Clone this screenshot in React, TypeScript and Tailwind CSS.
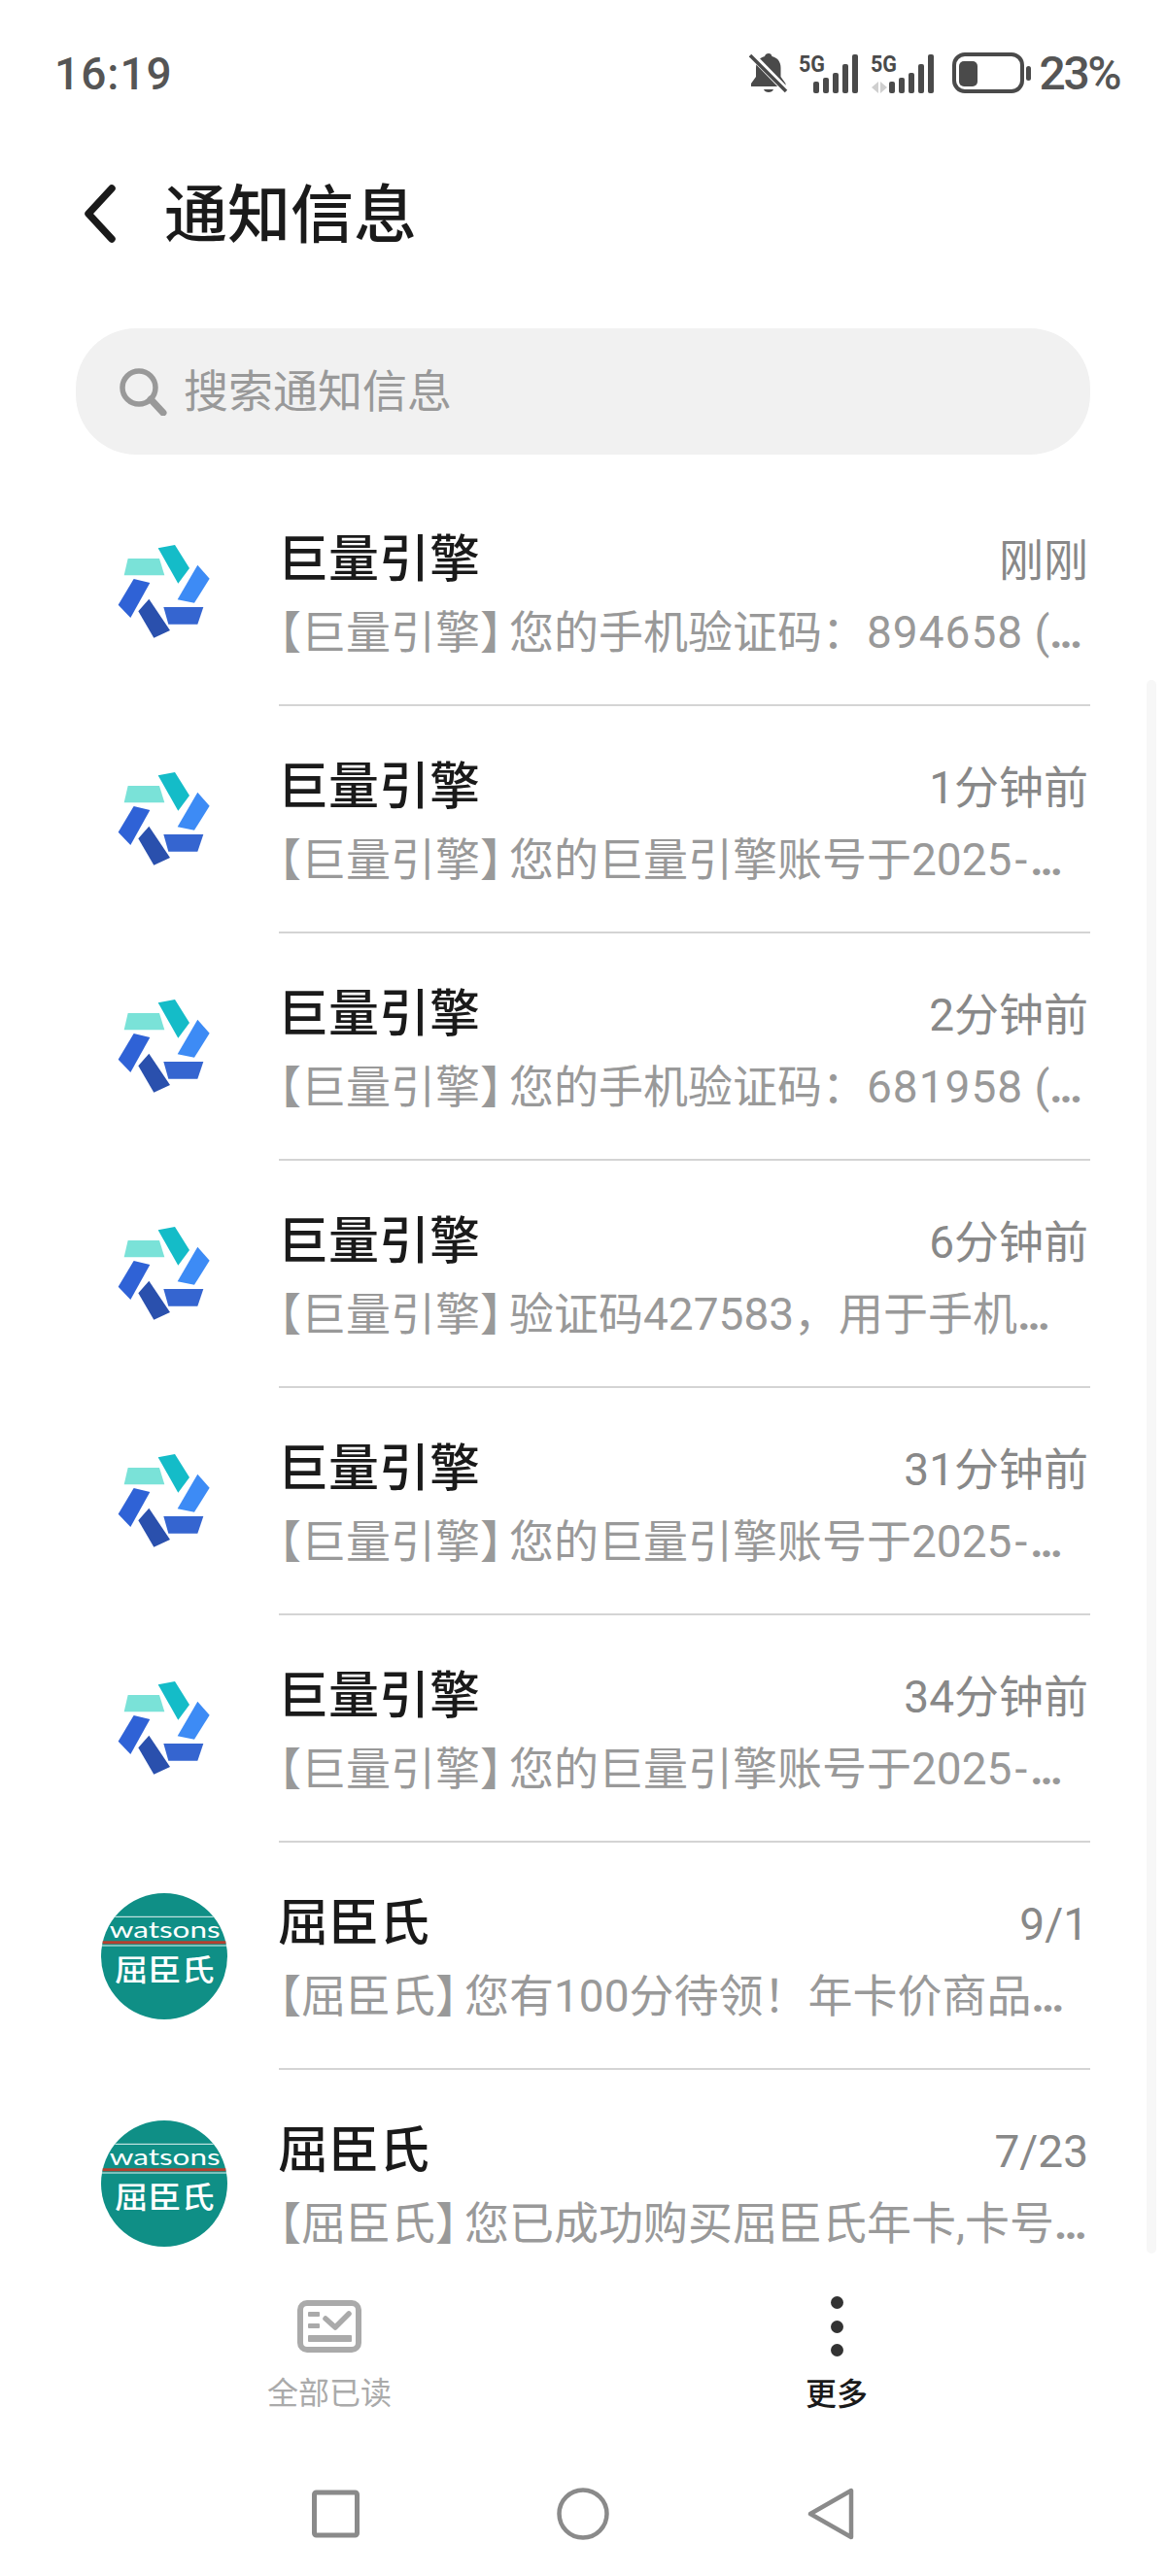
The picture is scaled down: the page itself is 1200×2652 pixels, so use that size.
import React from "react";

const dash = <span className="mx-[3px]">-</span>;

const rows = [
  { logo: "ocean", title: "巨量引擎", time: "刚刚", text: <>您的手机验证码：<span className="tracking-[1px]">894658</span> (</> },
  { logo: "ocean", title: "巨量引擎", time: "1分钟前", text: <>您的巨量引擎账号于2025{dash}</> },
  { logo: "ocean", title: "巨量引擎", time: "2分钟前", text: <>您的手机验证码：<span className="tracking-[1px]">681958</span> (</> },
  { logo: "ocean", title: "巨量引擎", time: "6分钟前", text: <>验证码427583，用于手机</> },
  { logo: "ocean", title: "巨量引擎", time: "31分钟前", text: <>您的巨量引擎账号于2025{dash}</> },
  { logo: "ocean", title: "巨量引擎", time: "34分钟前", text: <>您的巨量引擎账号于2025{dash}</> },
  { logo: "watsons", title: "屈臣氏", time: "9/1", text: <>您有100分待领！年卡价商品</> },
  { logo: "watsons", title: "屈臣氏", time: "7/23", text: <>您已成功购买屈臣氏年卡,卡号</> },
];

const OceanLogo = () => (
  <svg viewBox="42 45 390 390" className="h-[130px] w-[130px]">
    <polygon points="125,135 222,135 238,187 113,187" fill="#7ae2d8" />
    <polygon points="218,103 270,93 315,165 280,212" fill="#14bcc8" />
    <polygon points="340,155 377,197 330,272 278,262" fill="#3d8bf5" />
    <polygon points="235,285 358,285 340,338 250,338" fill="#3565d0" />
    <polygon points="190,260 255,357 205,380 157,298" fill="#2a50ad" />
    <polygon points="143,198 193,210 133,318 95,278" fill="#2f62d6" />
  </svg>
);

const WatsonsLogo = () => (
  <svg viewBox="42 60 390 390" className="h-[130px] w-[130px]">
    <circle cx="237" cy="255" r="195" fill="#0f8f86" />
    <path d="M85 133H389" stroke="#e6f5f3" strokeWidth="3" />
    <path d="M47 212H427" stroke="#b5402f" strokeWidth="9" />
    <path d="M44 222H430" stroke="#e6f5f3" strokeWidth="3" />
    <text x="68" y="197" fill="#fff" fontFamily="Lato, sans-serif" fontSize="72" textLength="342" lengthAdjust="spacingAndGlyphs">
      watsons
    </text>
    <text x="84" y="330" fill="#fff" fontFamily="'Noto Sans CJK SC', sans-serif" fontWeight="500" fontSize="92" textLength="308" lengthAdjust="spacingAndGlyphs">
      屈臣氏
    </text>
  </svg>
);

const BellOff = () => (
  <svg viewBox="0 0 40 44" className="h-[44px] w-[40px]">
    <path d="M20 1c2 0 3 1 3.500 3 6 1.500 9 6 9 12v9l5 7v3H2v-3l5-7v-9c0-6 3-10.500 9-12 .5-2 2-3 4-3z" fill="#4a4a4a" />
    <path d="M15 38h10c-1 4-9 4-10 0z" fill="#4a4a4a" />
    <path d="M2 2 37 38" stroke="#fff" strokeWidth="7" />
    <path d="M1 3 38 40" stroke="#4a4a4a" strokeWidth="3.500" />
  </svg>
);

const Signal = ({ data }: { data?: boolean }) => {
  const left = data ? 19 : 15;
  return (
    <svg
      viewBox={data ? "0 0 68 44" : "0 0 62 44"}
      className={data ? "h-[44px] w-[68px] overflow-visible" : "h-[44px] w-[62px] overflow-visible"}
    >
      <text x="0" y="20" fill="#4a4a4a" fontFamily="Roboto, sans-serif" fontWeight="700" fontSize="24" textLength="27" lengthAdjust="spacingAndGlyphs">
        5G
      </text>
      {data ? (
        <g fill="#cfcfcf">
          <path d="M8 30v12l-7-6z" />
          <path d="M10 30v12l7-6z" />
        </g>
      ) : null}
      <rect x={left} y="30" width="6" height="12" rx="2" fill="#4a4a4a" />
      <rect x={left + 10} y="26" width="6" height="16" rx="2" fill="#4a4a4a" />
      <rect x={left + 20} y="21" width="6" height="21" rx="2" fill="#4a4a4a" />
      <rect x={left + 30} y="12" width="6" height="30" rx="2" fill="#4a4a4a" />
      <rect x={left + 40} y="2" width="6" height="40" rx="2" fill="#4a4a4a" />
    </svg>
  );
};

const Battery = () => (
  <svg viewBox="0 0 82 44" className="h-[44px] w-[82px]">
    <rect x="2" y="2" width="70" height="38" rx="11" fill="none" stroke="#4a4a4a" strokeWidth="4" />
    <rect x="7" y="9" width="19" height="26" rx="5" fill="#4a4a4a" />
    <rect x="76" y="14" width="5" height="15" rx="2.500" fill="#4a4a4a" />
  </svg>
);

export default function App() {
  return (
    <div className="flex h-[2652px] w-[1200px] flex-col overflow-hidden bg-white [font-family:Roboto,'Noto_Sans_CJK_SC',sans-serif]">
      {/* status bar */}
      <div className="flex h-[150px] shrink-0 items-center justify-between pl-[56px] pr-[48px] pt-[2px]">
        <span className="text-[46px] font-medium leading-none tracking-[1px] text-[#555]">16:19</span>
        <div className="flex items-center">
          <BellOff />
          <div className="ml-[11px]"><Signal /></div>
          <div className="ml-[12px]"><Signal data /></div>
          <div className="ml-[16px]"><Battery /></div>
          <span className="ml-[8px] text-[48px] font-medium leading-none tracking-[-2.500px] text-[#555]">23%</span>
        </div>
      </div>

      {/* title */}
      <div className="flex h-[140px] shrink-0 items-center pl-[82px]">
        <svg viewBox="0 0 40 62" className="h-[62px] w-[40px]">
          <path d="M33 5 9 31l24 26" fill="none" stroke="#1a1a1a" strokeWidth="7.500" strokeLinecap="round" strokeLinejoin="round" />
        </svg>
        <h1 className="ml-[47px] mt-[5px] text-[65px] font-medium leading-none text-[#1a1a1a]">通知信息</h1>
      </div>

      {/* search */}
      <div className="mt-[48px] shrink-0 pl-[78px] pr-[78px]">
        <div className="flex h-[130px] items-center rounded-[62px] bg-[#f1f1f1] pl-[44px]">
          <svg viewBox="0 0 50 50" className="h-[50px] w-[50px]">
            <circle cx="21" cy="21" r="17" fill="none" stroke="#999" strokeWidth="5.500" />
            <path d="M33 33 46 47" stroke="#999" strokeWidth="7" strokeLinecap="round" />
          </svg>
          <span className="ml-[17px] text-[46px] leading-none text-[#999]">搜索通知信息</span>
        </div>
      </div>

      {/* list */}
      <div className="relative mt-[25px] min-h-0 flex-1 overflow-hidden">
        <div className="absolute right-[10px] top-[207px] h-[1620px] w-[10px] rounded-full bg-[#f7f7f7]" />
        {rows.map((row, i) => (
          <div key={i} className="flex h-[234px] items-center pl-[104px]">
            <div className="shrink-0">{row.logo === "ocean" ? <OceanLogo /> : <WatsonsLogo />}</div>
            <div className="ml-[53px] flex h-full w-[835px] flex-col border-b-2 border-[#d4d4d4]">
              <div className="mt-[54px] flex h-[60px] items-center justify-between pr-[2px]">
                <span className="-ml-[1px] text-[52px] font-medium leading-none text-[#1a1a1a]">{row.title}</span>
                <span className="text-[46px] leading-none text-[#888]">{row.time}</span>
              </div>
              <p className="mt-[14px] whitespace-nowrap text-[46px] leading-[60px] text-[#999]">
                <span className="[font-feature-settings:'halt']">【</span>
                {row.logo === "ocean" ? "巨量引擎" : "屈臣氏"}
                <span className="mr-[7px] [font-feature-settings:'halt']">】</span>
                {row.text}
                <span className="font-bold tracking-[-3px]">...</span>
              </p>
            </div>
          </div>
        ))}
      </div>

      {/* bottom actions */}
      <div className="flex h-[200px] shrink-0 bg-white">
        <div className="flex w-[678px] flex-col items-center pt-[46px]">
          <svg viewBox="0 0 66 54" className="h-[54px] w-[66px]">
            <rect x="3" y="3" width="60" height="48" rx="7" fill="none" stroke="#aaaaaa" strokeWidth="6" />
            <rect x="11" y="12" width="12" height="5" rx="1" fill="#aaaaaa" />
            <rect x="11" y="24" width="12" height="5" rx="1" fill="#aaaaaa" />
            <rect x="11" y="36" width="45" height="7" rx="1" fill="#aaaaaa" />
            <path d="M29 19l10 9 14-14" fill="none" stroke="#aaaaaa" strokeWidth="5.500" strokeLinecap="round" strokeLinejoin="round" />
          </svg>
          <span className="mt-[16px] text-[32px] leading-[52px] text-[#aaa]">全部已读</span>
        </div>
        <div className="flex w-[366px] flex-col items-center pt-[42px]">
          <div className="flex h-[62px] flex-col items-center justify-between">
            <span className="h-[13px] w-[13px] rounded-full bg-[#333]" />
            <span className="h-[13px] w-[13px] rounded-full bg-[#333]" />
            <span className="h-[13px] w-[13px] rounded-full bg-[#333]" />
          </div>
          <span className="mt-[13px] text-[32px] font-medium leading-[52px] text-[#1a1a1a]">更多</span>
        </div>
      </div>

      {/* nav bar */}
      <div className="flex h-[130px] shrink-0 items-start pt-[39px]">
        <svg viewBox="0 0 50 54" className="ml-[321px] h-[54px] w-[50px]">
          <rect x="2.500" y="5" width="44" height="44" rx="2" fill="none" stroke="#8a8a8a" strokeWidth="5" />
        </svg>
        <svg viewBox="0 0 54 54" className="ml-[202px] h-[54px] w-[54px]">
          <circle cx="27" cy="27" r="24.500" fill="none" stroke="#8a8a8a" strokeWidth="4.500" />
        </svg>
        <svg viewBox="0 0 48 54" className="ml-[204px] h-[54px] w-[48px]">
          <path d="M45 3v48L3 27z" fill="none" stroke="#8a8a8a" strokeWidth="4.500" strokeLinejoin="round" />
        </svg>
      </div>
    </div>
  );
}
